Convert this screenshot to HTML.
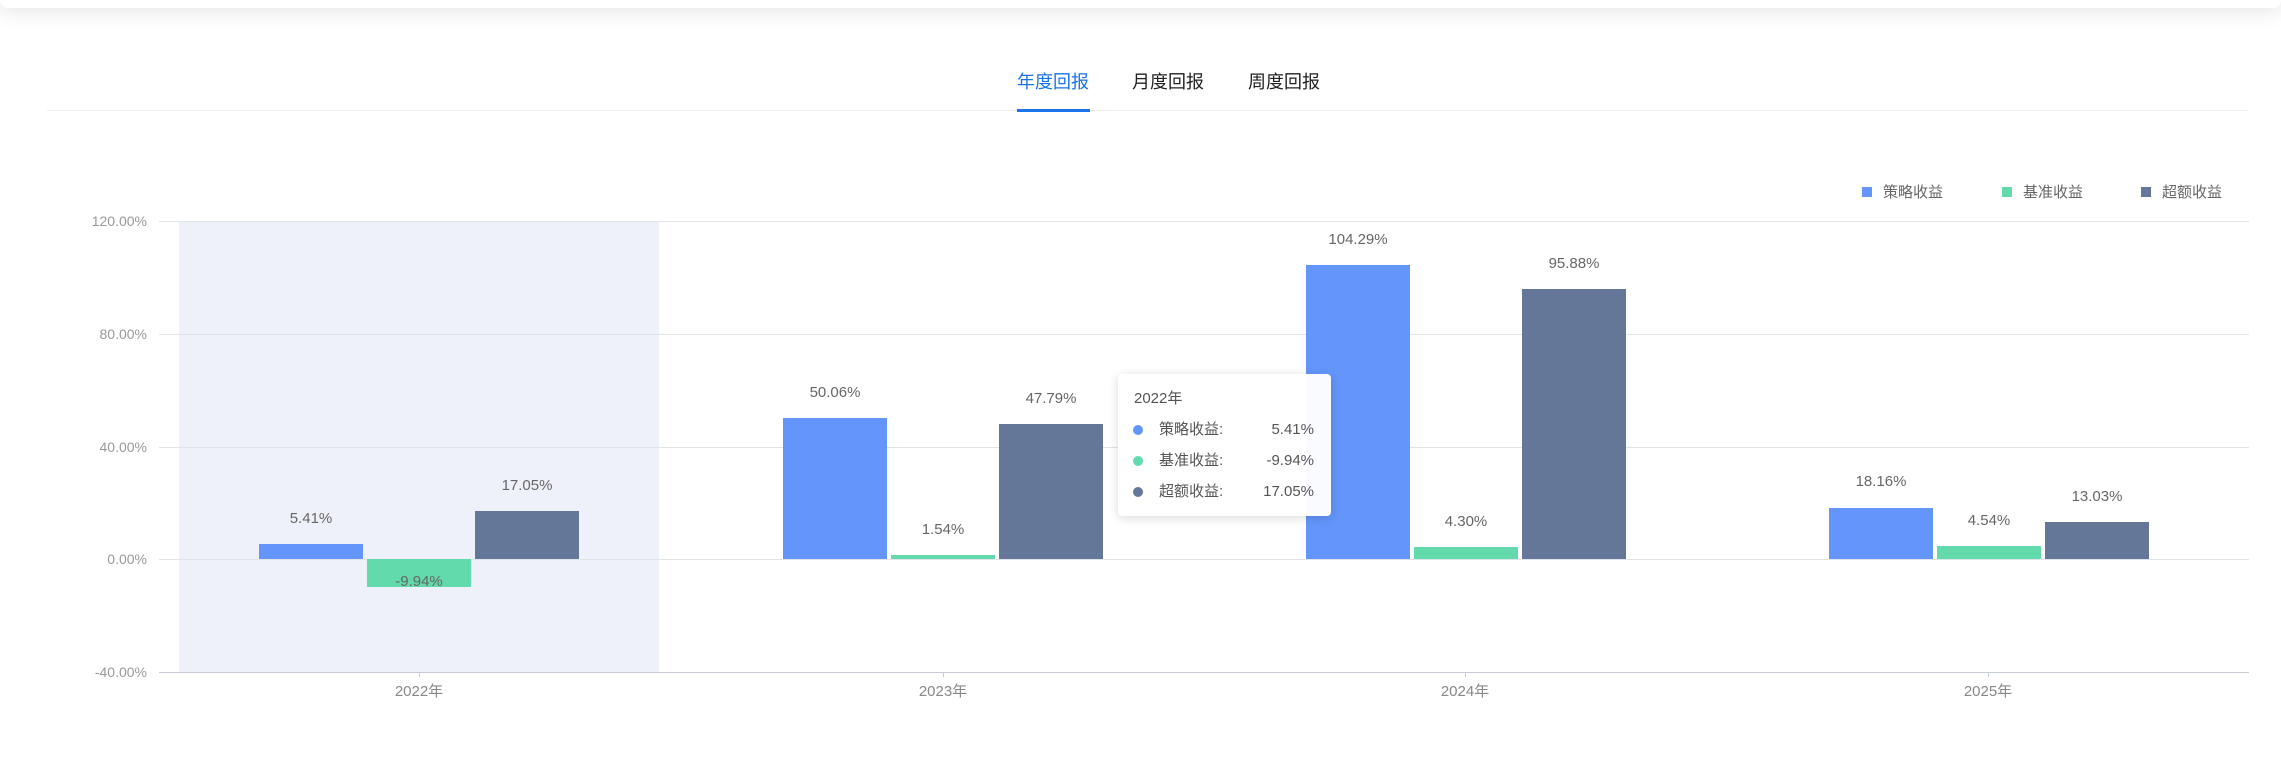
<!DOCTYPE html>
<html><head><meta charset="utf-8"><style>
body{margin:0;width:2281px;height:768px;background:#fff;position:relative;overflow:hidden;font-family:"Liberation Sans","Noto Sans CJK SC",sans-serif}
.a{position:absolute}
.g{position:absolute;left:159px;width:2090px;height:1px;background:#e0e3e8}
.yl{position:absolute;right:2134px;font-size:14px;color:#999;transform:translateY(-50%)}
.bar{position:absolute;width:104px}
.lb{position:absolute;width:160px;text-align:center;font-size:15px;color:#666;transform:translateX(-50%)}
.xl{position:absolute;top:680px;font-size:15px;color:#888;transform:translateX(-50%)}
.tk{position:absolute;top:672px;width:1px;height:5px;background:#c8ccd4}
.tt div{line-height:20px}
</style></head><body>
<div class="a" style="left:0;top:-20px;width:2281px;height:28px;background:#fff;border-radius:8px;box-shadow:0 4px 20px rgba(0,0,0,0.10)"></div>
<div class="a" style="left:1017px;top:68px;font-size:18px;color:#1a73e8">年度回报</div>
<div class="a" style="left:1132px;top:68px;font-size:18px;color:#222">月度回报</div>
<div class="a" style="left:1248px;top:68px;font-size:18px;color:#222">周度回报</div>
<div class="a" style="left:47px;top:110px;width:2201px;height:1px;background:#eceef1"></div>
<div class="a" style="left:1017px;top:109px;width:73px;height:3px;background:#1a73e8"></div>

<div class="a" style="left:1862px;top:187px;width:10px;height:10px;background:#6395fa"></div>
<div class="a" style="left:1883px;top:181px;font-size:15px;color:#666">策略收益</div>
<div class="a" style="left:2002px;top:187px;width:10px;height:10px;background:#62daab"></div>
<div class="a" style="left:2023px;top:181px;font-size:15px;color:#666">基准收益</div>
<div class="a" style="left:2141px;top:187px;width:10px;height:10px;background:#657798"></div>
<div class="a" style="left:2162px;top:181px;font-size:15px;color:#666">超额收益</div>

<div class="a" style="left:179px;top:221px;width:480px;height:451px;background:#eef1f9"></div>
<div class="g" style="top:221px"></div>
<div class="g" style="top:334px"></div>
<div class="g" style="top:447px"></div>
<div class="g" style="top:559px"></div>
<div class="g" style="top:672px;background:#c8ccd4"></div>
<div class="yl" style="top:221px">120.00%</div>
<div class="yl" style="top:334px">80.00%</div>
<div class="yl" style="top:447px">40.00%</div>
<div class="yl" style="top:559px">0.00%</div>
<div class="yl" style="top:672px">-40.00%</div>

<!-- 2022 -->
<div class="bar" style="left:259px;top:544px;height:15px;background:#6395fa"></div>
<div class="bar" style="left:367px;top:559px;height:28px;background:#62daab"></div>
<div class="bar" style="left:475px;top:511px;height:48px;background:#657798"></div>
<div class="lb" style="left:311px;top:510px">5.41%</div>
<div class="lb" style="left:419px;top:573px">-9.94%</div>
<div class="lb" style="left:527px;top:477px">17.05%</div>
<!-- 2023 -->
<div class="bar" style="left:783px;top:418px;height:141px;background:#6395fa"></div>
<div class="bar" style="left:891px;top:555px;height:4px;background:#62daab"></div>
<div class="bar" style="left:999px;top:424px;height:135px;background:#657798"></div>
<div class="lb" style="left:835px;top:384px">50.06%</div>
<div class="lb" style="left:943px;top:521px">1.54%</div>
<div class="lb" style="left:1051px;top:390px">47.79%</div>
<!-- 2024 -->
<div class="bar" style="left:1306px;top:265px;height:294px;background:#6395fa"></div>
<div class="bar" style="left:1414px;top:547px;height:12px;background:#62daab"></div>
<div class="bar" style="left:1522px;top:289px;height:270px;background:#657798"></div>
<div class="lb" style="left:1358px;top:231px">104.29%</div>
<div class="lb" style="left:1466px;top:513px">4.30%</div>
<div class="lb" style="left:1574px;top:255px">95.88%</div>
<!-- 2025 -->
<div class="bar" style="left:1829px;top:508px;height:51px;background:#6395fa"></div>
<div class="bar" style="left:1937px;top:546px;height:13px;background:#62daab"></div>
<div class="bar" style="left:2045px;top:522px;height:37px;background:#657798"></div>
<div class="lb" style="left:1881px;top:473px">18.16%</div>
<div class="lb" style="left:1989px;top:512px">4.54%</div>
<div class="lb" style="left:2097px;top:488px">13.03%</div>

<div class="tk" style="left:419px"></div><div class="tk" style="left:943px"></div><div class="tk" style="left:1465px"></div><div class="tk" style="left:1988px"></div>
<div class="xl" style="left:419px">2022年</div>
<div class="xl" style="left:943px">2023年</div>
<div class="xl" style="left:1465px">2024年</div>
<div class="xl" style="left:1988px">2025年</div>

<div class="a tt" style="left:1118px;top:374px;width:213px;height:142px;background:rgba(255,255,255,0.96);border-radius:4px;box-shadow:0 2px 10px rgba(0,0,0,0.15);font-size:15px;color:#555">
<div class="a" style="left:16px;top:15px">2022年</div>
<div class="a" style="left:15px;top:51px;width:10px;height:10px;border-radius:50%;background:#6395fa"></div>
<div class="a" style="left:41px;top:46px">策略收益:</div><div class="a" style="right:17px;top:46px">5.41%</div>
<div class="a" style="left:15px;top:82px;width:10px;height:10px;border-radius:50%;background:#62daab"></div>
<div class="a" style="left:41px;top:77px">基准收益:</div><div class="a" style="right:17px;top:77px">-9.94%</div>
<div class="a" style="left:15px;top:113px;width:10px;height:10px;border-radius:50%;background:#657798"></div>
<div class="a" style="left:41px;top:108px">超额收益:</div><div class="a" style="right:17px;top:108px">17.05%</div>
</div>
</body></html>
